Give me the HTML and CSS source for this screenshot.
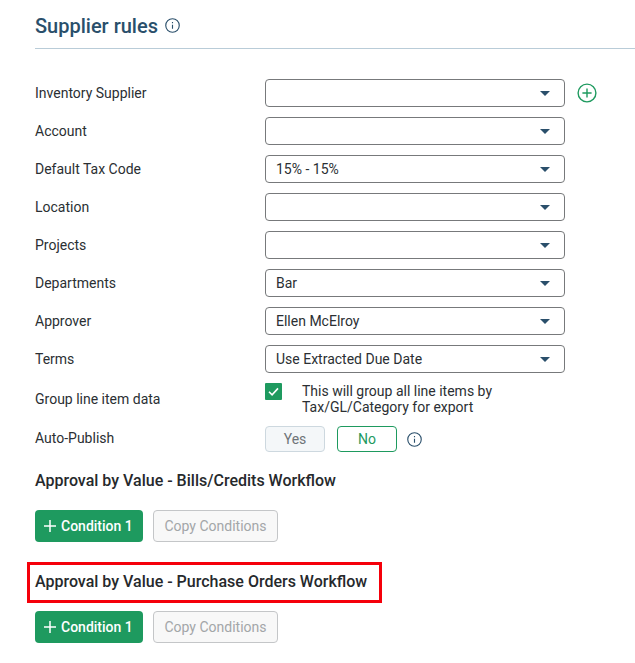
FILE: index.html
```html
<!DOCTYPE html>
<html lang="en">
  <head>
    <meta charset="UTF-8" />
    <title>Supplier rules</title>
    <link rel="stylesheet" href="styles.css">
  </head>
  <body>
    <div class="page-header">
      <h1>Supplier rules</h1>
      <svg class="info-icon" viewBox="0 0 16 16" width="15" height="15">
        <circle cx="8" cy="8" r="7.2" />
        <path d="M8 7.2v4.2M8 4.2v1.5" />
      </svg>
    </div>

    <div class="rules-form">
      <label>Inventory Supplier</label>
      <div class="field-with-add">
        <div class="select-box"><span class="caret"></span></div>
        <svg class="add-icon" viewBox="0 0 20 20" width="20" height="20">
          <circle cx="10" cy="10" r="8.9" />
          <path d="M10 5.4v9.2M5.4 10h9.2" />
        </svg>
      </div>

      <label>Account</label>
      <div class="select-box"><span class="caret"></span></div>

      <label>Default Tax Code</label>
      <div class="select-box">15% - 15%<span class="caret"></span></div>

      <label>Location</label>
      <div class="select-box"><span class="caret"></span></div>

      <label>Projects</label>
      <div class="select-box"><span class="caret"></span></div>

      <label>Departments</label>
      <div class="select-box">Bar<span class="caret"></span></div>

      <label>Approver</label>
      <div class="select-box">Ellen McElroy<span class="caret"></span></div>

      <label>Terms</label>
      <div class="select-box">Use Extracted Due Date<span class="caret"></span></div>

      <label>Group line item data</label>
      <div class="check-field">
        <span class="checkbox">
          <svg viewBox="0 0 17 17" width="17" height="17"><path d="M4 8.8l3.1 3L13 5.4" /></svg>
        </span>
        <span class="check-text">This will group all line items by Tax/GL/Category for export</span>
      </div>

      <label class="label-up">Auto-Publish</label>
      <div class="toggle-field">
        <button class="toggle">Yes</button>
        <button class="toggle toggle-active">No</button>
        <svg class="info-icon" viewBox="0 0 16 16" width="15" height="15">
          <circle cx="8" cy="8" r="7.2" />
          <path d="M8 7.2v4.2M8 4.2v1.5" />
        </svg>
      </div>
    </div>

    <div class="workflow">
      <h2>Approval by Value - Bills/Credits Workflow</h2>
      <div class="workflow-buttons">
        <button class="btn-condition">
          <svg viewBox="0 0 12 12" width="12" height="12"><path d="M6 0v12M0 6h12" /></svg>
          Condition 1
        </button>
        <button class="btn-copy">Copy Conditions</button>
      </div>
    </div>

    <div class="workflow workflow-marked">
      <h2 class="marked">Approval by Value - Purchase Orders Workflow</h2>
      <div class="workflow-buttons">
        <button class="btn-condition">
          <svg viewBox="0 0 12 12" width="12" height="12"><path d="M6 0v12M0 6h12" /></svg>
          Condition 1
        </button>
        <button class="btn-copy">Copy Conditions</button>
      </div>
    </div>
  </body>
</html>
```

FILE: styles.css
```css
* {
  margin: 0;
  padding: 0;
  box-sizing: border-box;
}

body {
  font-family: "Roboto", sans-serif;
  font-size: 14px;
  color: #2b2f33;
  background-color: #ffffff;
  height: 663px;
  overflow: hidden;
}

button {
  font-family: inherit;
}

.page-header {
  display: flex;
  align-items: center;
  gap: 7px;
  height: 49px;
  margin-left: 35px;
  padding-top: 3px;
  border-bottom: 1px solid #b9ccd8;
}

.page-header h1 {
  font-size: 20px;
  font-weight: 500;
  color: #2a4f6b;
}

.info-icon {
  fill: none;
  stroke: #2a4f6b;
  stroke-width: 1.2;
}

/* Form rows */
.rules-form {
  display: grid;
  grid-template-columns: 230px 1fr;
  align-items: center;
  row-gap: 10px;
  margin-top: 30px;
  padding-left: 35px;
}

.label-up {
  margin-top: -1px;
}

.select-box {
  position: relative;
  width: 300px;
  height: 28px;
  padding-left: 10px;
  line-height: 26px;
  background-color: #ffffff;
  border: 1px solid #77797b;
  border-radius: 4px;
}

.caret {
  position: absolute;
  right: 14px;
  top: 11px;
  width: 0;
  height: 0;
  border-left: 5px solid transparent;
  border-right: 5px solid transparent;
  border-top: 5px solid #2a4f6b;
}

.field-with-add {
  display: flex;
  align-items: center;
  gap: 12px;
}

.add-icon {
  fill: none;
  stroke: #1e9a5f;
  stroke-width: 1.4;
}

.check-field {
  display: flex;
  align-items: flex-start;
  gap: 20px;
  width: 300px;
}

.checkbox {
  flex: none;
  width: 17px;
  height: 17px;
  background-color: #1e9a5f;
  border-radius: 1px;
}

.checkbox svg {
  display: block;
  fill: none;
  stroke: #ffffff;
  stroke-width: 1.6;
}

.check-text {
  line-height: 16px;
}

.toggle-field {
  display: flex;
  align-items: center;
  gap: 12px;
  margin-top: 1px;
}

.toggle {
  width: 60px;
  height: 26px;
  font-size: 14px;
  color: #6f7478;
  background-color: #f4f7f9;
  border: 1px solid #cdd8df;
  border-radius: 4px;
}

.toggle-active {
  color: #1e9a5f;
  background-color: #ffffff;
  border-color: #1e9a5f;
}

.toggle-field .info-icon {
  margin-left: -2px;
}

/* Approval workflows */
.workflow {
  padding-left: 35px;
  margin-top: 20px;
}

.workflow h2 {
  font-size: 16px;
  font-weight: 500;
  line-height: 18px;
  color: #26292c;
}

.workflow-buttons {
  display: flex;
  gap: 10px;
  margin-top: 20px;
}

.btn-condition {
  display: flex;
  align-items: center;
  gap: 5px;
  width: 108px;
  height: 32px;
  padding-left: 9px;
  font-size: 14px;
  font-weight: 500;
  color: #ffffff;
  background-color: #1e9a5f;
  border: none;
  border-radius: 4px;
}

.btn-condition svg {
  fill: none;
  stroke: #ffffff;
  stroke-width: 1.5;
}

.btn-copy {
  width: 125px;
  height: 32px;
  font-size: 14px;
  color: #a3a6a8;
  background-color: #f8f8f8;
  border: 1px solid #c4c6c8;
  border-radius: 4px;
}

.workflow-marked .workflow-buttons {
  margin-top: 8px;
}

.marked {
  display: inline-block;
  height: 41px;
  margin-left: -8px;
  padding: 8px 12px 0 5px;
  border: 3px solid #f5000a;
  vertical-align: top;
}
```
